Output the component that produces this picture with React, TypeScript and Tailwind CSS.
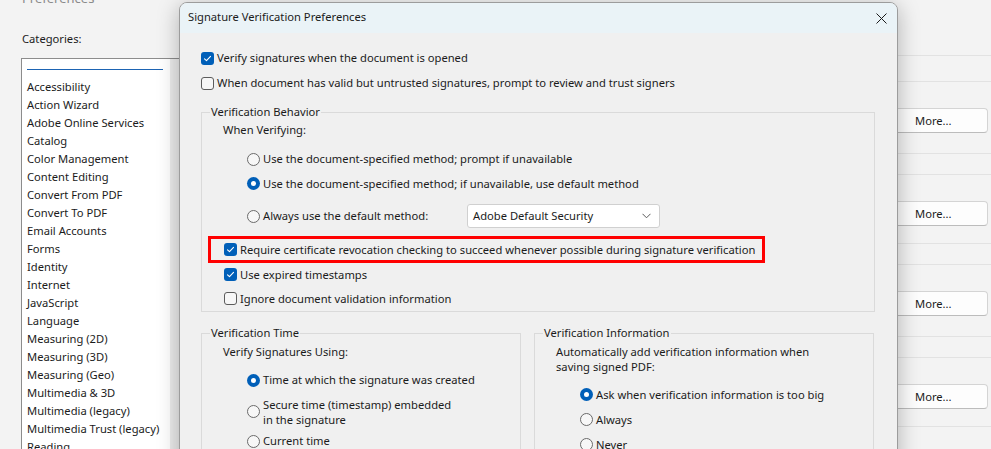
import React from 'react';

const categories = [
  'Accessibility',
  'Action Wizard',
  'Adobe Online Services',
  'Catalog',
  'Color Management',
  'Content Editing',
  'Convert From PDF',
  'Convert To PDF',
  'Email Accounts',
  'Forms',
  'Identity',
  'Internet',
  'JavaScript',
  'Language',
  'Measuring (2D)',
  'Measuring (3D)',
  'Measuring (Geo)',
  'Multimedia & 3D',
  'Multimedia (legacy)',
  'Multimedia Trust (legacy)',
  'Reading',
];

const Checkbox: React.FC<{ checked?: boolean }> = ({ checked }) =>
  checked ? (
    <span className="w-[13px] h-[13px] shrink-0 rounded-[3px] bg-[#005fb8] flex items-center justify-center">
      <svg width="9" height="9" viewBox="0 0 9 9" fill="none">
        <path d="M1.5 4.8 L3.5 6.6 L7.5 2.4" stroke="white" strokeWidth="1.1" strokeLinecap="round" strokeLinejoin="round" />
      </svg>
    </span>
  ) : (
    <span className="w-[13px] h-[13px] shrink-0 rounded-[3px] border border-[#5c5c5c] bg-[#f7f7f7]" />
  );

const Radio: React.FC<{ checked?: boolean }> = ({ checked }) =>
  checked ? (
    <span className="w-[13px] h-[13px] shrink-0 rounded-full bg-[#005fb8] flex items-center justify-center">
      <span className="w-[5px] h-[5px] rounded-full bg-white" />
    </span>
  ) : (
    <span className="w-[13px] h-[13px] shrink-0 rounded-full border border-[#6a6a6a] bg-[#f7f7f7]" />
  );

const CheckRow: React.FC<{ checked?: boolean; label: string; className?: string }> = ({ checked, label, className }) => (
  <div className={`flex items-center gap-[3px] whitespace-nowrap ${className ?? ''}`}>
    <Checkbox checked={checked} />
    <span>{label}</span>
  </div>
);

const RadioRow: React.FC<{ checked?: boolean; children: React.ReactNode; className?: string }> = ({ checked, children, className }) => (
  <div className={`flex items-center gap-[3px] whitespace-nowrap ${className ?? ''}`}>
    <Radio checked={checked} />
    {children}
  </div>
);

const MoreButton: React.FC = () => (
  <div className="h-[25px] w-[120px] ml-auto mr-[3px] rounded-[4px] border border-[#d4d4d4] border-b-[#bcbcbc] bg-[#fdfdfd] flex items-center pl-[46px]">
    More...
  </div>
);

const Line: React.FC = () => <div className="h-px bg-[#e2e2e2]" />;

export default function App() {
  return (
    <div
      className="relative w-[991px] h-[449px] overflow-hidden bg-[#f3f3f3] text-[11.2px] leading-[16px] text-[#1b1b1b] flex"
      style={{ fontFamily: '"Noto Sans", "Open Sans", sans-serif' }}
    >
      {/* Background: Preferences window */}
      <div className="w-[180px] shrink-0 pl-[21px] flex flex-col">
        <div className="-mt-[10px] h-[16px] text-[13px] text-[#8a8a8a] pl-[1px]">Preferences</div>
        <div className="mt-[25px] h-[16px] pl-[1px]">Categories:</div>
        <div className="mt-[11px] flex-1 bg-white border-l border-t border-[#8c8c8c] flex">
          <div className="flex-1 pt-[10px] pl-[5px]">
            <div className="h-px bg-[#1d64b3] w-[136px]" />
            <div className="mt-[8px] flex flex-col">
              {categories.map(c => (
                <div key={c} className="h-[18px] leading-[18px] whitespace-nowrap">{c}</div>
              ))}
            </div>
          </div>
          <div className="w-[10px] bg-[#ececec]" />
        </div>
      </div>

      <div className="flex-1 flex flex-col">
        <div className="h-[55px]" />
        <Line />
        <div className="h-[25px]" />
        <Line />
        <div className="h-[26px]" />
        <MoreButton />
        <div className="h-[20px]" />
        <Line />
        <div className="h-[20px]" />
        <Line />
        <div className="h-[26px]" />
        <MoreButton />
        <div className="h-[17px]" />
        <Line />
        <div className="h-[20px]" />
        <Line />
        <div className="h-[26px]" />
        <MoreButton />
        <div className="h-[20px]" />
        <Line />
        <div className="h-[20px]" />
        <Line />
        <div className="h-[26px]" />
        <MoreButton />
        <div className="h-[17px]" />
        <Line />
      </div>

      {/* Dialog */}
      <div className="absolute left-[179px] top-[2px] w-[719px] h-[470px] rounded-t-[8px] border border-[#9c9c9c] bg-[#f0f0f0] shadow-[0_4px_22px_rgba(0,0,0,0.28)] flex flex-col overflow-hidden">
        <div className="h-[30px] shrink-0 bg-[#eaf3f7] flex items-center justify-between pl-[8px] pr-[10px]">
          <span className="-mt-[2px]">Signature Verification Preferences</span>
          <svg width="11" height="11" viewBox="0 0 11 11">
            <path d="M0.5 0.5 L10.5 10.5 M10.5 0.5 L0.5 10.5" stroke="#1b1b1b" strokeWidth="1" />
          </svg>
        </div>

        <div className="pl-[21px] pr-[22px] pt-[13px] flex flex-col">
          <CheckRow checked label="Verify signatures when the document is opened" className="h-[24px]" />
          <CheckRow label="When document has valid but untrusted signatures, prompt to review and trust signers" className="h-[26px]" />

          <fieldset className="mt-[8px] border border-[#dadada] pl-0 pb-0 flex flex-col">
            <legend className="ml-[8px] px-px h-[16px]">Verification Behavior</legend>
            <div className="h-[20px] flex items-center pl-[21px]">When Verifying:</div>
            <div className="pl-[45px] pt-[7px] flex flex-col">
              <RadioRow className="h-[24px]"><span>Use the document-specified method; prompt if unavailable</span></RadioRow>
              <RadioRow checked className="h-[25px]"><span>Use the document-specified method; if unavailable, use default method</span></RadioRow>
              <RadioRow className="h-[40px]">
                <span className="w-[201px]">Always use the default method:</span>
                <div className="w-[193px] h-[24px] rounded-[3px] border border-[#d0d0d0] bg-white flex items-center justify-between pl-[5px] pr-[8px]">
                  <span>Adobe Default Security</span>
                  <svg width="9" height="6" viewBox="0 0 9 6">
                    <path d="M0.5 0.8 L4.5 4.8 L8.5 0.8" stroke="#5a5a5a" strokeWidth="1" fill="none" />
                  </svg>
                </div>
              </RadioRow>
            </div>
            <div className="ml-[6px] w-[557px] h-[27px] border-[3px] border-[#ff0000] flex items-center pl-[13px]">
              <CheckRow checked label="Require certificate revocation checking to succeed whenever possible during signature verification" />
            </div>
            <CheckRow checked label="Use expired timestamps" className="h-[23px] pl-[22px]" />
            <CheckRow label="Ignore document validation information" className="h-[25px] pl-[22px]" />
          </fieldset>

          <div className="mt-[13px] flex gap-[13px]">
            <fieldset className="w-[320px] border border-[#dadada] flex flex-col">
              <legend className="ml-[8px] px-px h-[16px]">Verification Time</legend>
              <div className="h-[22px] flex items-center pl-[21px]">Verify Signatures Using:</div>
              <div className="pl-[45px] pt-[5px] flex flex-col">
                <RadioRow checked className="h-[24px]"><span>Time at which the signature was created</span></RadioRow>
                <RadioRow className="h-[39px]">
                  <span className="leading-[15px]">Secure time (timestamp) embedded<br />in the signature</span>
                </RadioRow>
                <RadioRow className="h-[20px]"><span>Current time</span></RadioRow>
              </div>
            </fieldset>
            <fieldset className="w-[340px] border border-[#dadada] flex flex-col">
              <legend className="ml-[8px] px-px h-[16px]">Verification Information</legend>
              <div className="pl-[21px] pt-[3px] leading-[15px] whitespace-nowrap">
                Automatically add verification information when
                <br />
                saving signed PDF:
              </div>
              <div className="pl-[45px] pt-[8px] flex flex-col">
                <RadioRow checked className="h-[25px]"><span>Ask when verification information is too big</span></RadioRow>
                <RadioRow className="h-[25px]"><span>Always</span></RadioRow>
                <RadioRow className="h-[25px]"><span>Never</span></RadioRow>
              </div>
            </fieldset>
          </div>
        </div>
      </div>
    </div>
  );
}
